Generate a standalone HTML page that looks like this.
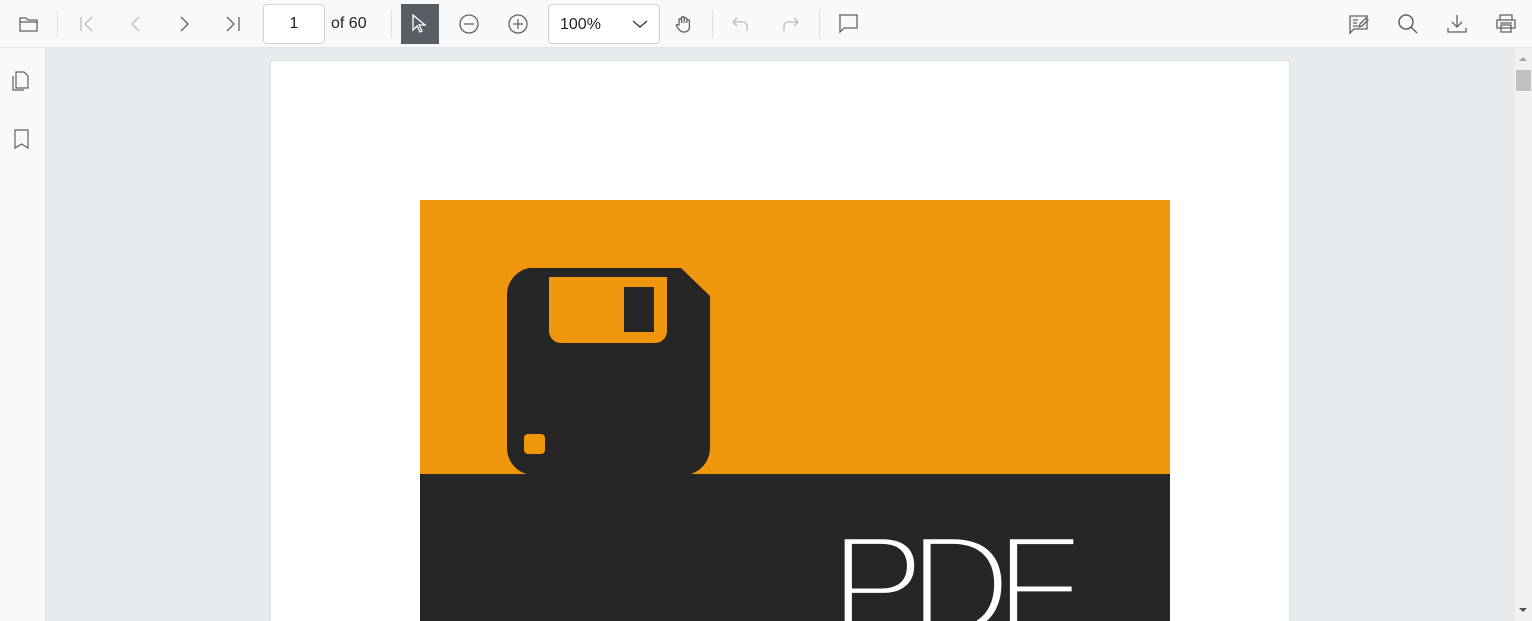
<!DOCTYPE html>
<html><head><style>
*{margin:0;padding:0;box-sizing:border-box}
html,body{width:1532px;height:621px;overflow:hidden}
body{background:#e8ebee;font-family:"Liberation Sans",sans-serif;position:relative}
.tb{position:absolute;left:0;top:0;width:1532px;height:48px;background:#f8f9fa;border-bottom:1px solid #e1e4e8}
.ic{position:absolute;top:12px}
.sep{position:absolute;top:10px;width:1px;height:28px;background:#dcdfe3}
.sb{position:absolute;left:0;top:48px;width:46px;height:573px;background:#f8f9fa;border-right:1px solid #e1e4e8}
</style></head><body>
<div class="tb">
<svg class="ic" style="left:18px;top:14px" width="22" height="20" viewBox="0 0 22 20" fill="none" stroke="#5f6368" stroke-width="1.3"><path d="M2 4h6l2 2h9v11H2z M2 8h17"/></svg>
<div class="sep" style="left:57px"></div>
<svg class="ic" width="24" height="24" style="left:75px" fill="none" stroke="#b8bcc1" stroke-width="1.3"><path d="M6 5v14M17 5l-7 7 7 7"/></svg>
<svg class="ic" width="24" height="24" style="left:124px" fill="none" stroke="#b8bcc1" stroke-width="1.3"><path d="M15 5l-7 7 7 7"/></svg>
<svg class="ic" width="24" height="24" style="left:172px" fill="none" stroke="#5f6368" stroke-width="1.3"><path d="M9 5l7 7-7 7"/></svg>
<svg class="ic" width="24" height="24" style="left:221px" fill="none" stroke="#5f6368" stroke-width="1.3"><path d="M6 5l7 7-7 7M18 5v14"/></svg>
<div style="position:absolute;left:263px;top:4px;width:62px;height:40px;background:#fff;border:1px solid #ced4da;border-radius:4px;text-align:center;line-height:38px;font-size:16px;color:#212529">1</div>
<div style="position:absolute;left:331px;top:15px;font-size:16px;color:#212529">of 60</div>
<div class="sep" style="left:391px"></div>
<div style="position:absolute;left:401px;top:4px;width:38px;height:40px;background:#585e64"></div>
<svg class="ic" width="20" height="22" style="left:410px;top:13px" viewBox="0 0 20 22" fill="none" stroke="#fff" stroke-width="1.3"><path d="M3 2v15l4-4 3 6 2-1-3-6h6z"/></svg>
<svg class="ic" width="24" height="24" style="left:457px" fill="none" stroke="#5f6368" stroke-width="1.3"><circle cx="12" cy="12" r="9"/><path d="M7 12h10"/></svg>
<svg class="ic" width="24" height="24" style="left:506px" fill="none" stroke="#5f6368" stroke-width="1.3"><circle cx="12" cy="12" r="9"/><path d="M7 12h10M12 7v10"/></svg>
<div style="position:absolute;left:548px;top:4px;width:112px;height:40px;background:#fff;border:1px solid #ced4da;border-radius:4px;font-size:16px;color:#212529;line-height:40px;padding-left:11px">100%</div>
<svg class="ic" width="20" height="20" style="left:630px;top:14px" fill="none" stroke="#333" stroke-width="1.3"><path d="M3 7l7 6 7-6"/></svg>
<svg class="ic" width="24" height="24" style="left:672px" fill="none" stroke="#5f6368" stroke-width="1.3"><path d="M7 13V8a1.3 1.3 0 0 1 2.6 0v3V6a1.3 1.3 0 0 1 2.6 0v5V7a1.3 1.3 0 0 1 2.6 0v4V9a1.3 1.3 0 0 1 2.6 0v6c0 3-2 5-5 5h-1c-2 0-3-1-4-2l-3-4c-.5-1 .5-2 1.5-1z"/></svg>
<div class="sep" style="left:712px"></div>
<svg class="ic" width="24" height="24" style="left:729px" fill="none" stroke="#b8bcc1" stroke-width="1.3"><path d="M8 6l-4 4 4 4M4 10h10a4 4 0 0 1 4 4v5"/></svg>
<svg class="ic" width="24" height="24" style="left:778px" fill="none" stroke="#b8bcc1" stroke-width="1.3"><path d="M16 6l4 4-4 4M20 10H10a4 4 0 0 0-4 4v5"/></svg>
<div class="sep" style="left:819px"></div>
<svg class="ic" width="24" height="24" style="left:837px" fill="none" stroke="#5f6368" stroke-width="1.3"><path d="M2 3h18v13H7l-4 4V3z"/></svg>
<svg class="ic" width="24" height="24" style="left:1347px" fill="none" stroke="#5f6368" stroke-width="1.3"><path d="M3 4h17v13H7l-4 4z M6 8h5M6 11h4M6 14h5M12 15l1-3 6-6 2 2-6 6z"/></svg>
<svg class="ic" width="24" height="24" style="left:1396px" fill="none" stroke="#5f6368" stroke-width="1.5"><circle cx="10" cy="10" r="7"/><path d="M15 15l6 6"/></svg>
<svg class="ic" width="24" height="24" style="left:1445px" fill="none" stroke="#5f6368" stroke-width="1.3"><path d="M12 3v12M7 10l5 5 5-5M3 16v4h18v-4"/></svg>
<svg class="ic" width="24" height="24" style="left:1494px" fill="none" stroke="#5f6368" stroke-width="1.3"><path d="M6 8V3h12v5M3 8h18v8H3zM7 13h10v7H7zM6 11h12"/></svg>
</div>
<div class="sb">
<svg style="position:absolute;left:11px;top:22px" width="22" height="22" fill="none" stroke="#5f6368" stroke-width="1.2"><path d="M5 2h8l4 4v12H5z M2 6v14h11"/></svg>
<svg style="position:absolute;left:11px;top:80px" width="22" height="22" fill="none" stroke="#5f6368" stroke-width="1.2"><path d="M4 2h13v18l-6.5-4L4 20z"/></svg>
</div>
<div style="position:absolute;left:270px;top:60px;width:1020px;height:561px;background:#fff;border:1px solid #e1e4e8;border-bottom:none"></div>
<svg style="position:absolute;left:420px;top:200px" width="750" height="421">
<rect width="750" height="275" fill="#f0960c"/>
<rect y="274" width="750" height="147" fill="#262626"/>
<path d="M109 68h152l29 28v152a27 27 0 0 1-27 27H114a27 27 0 0 1-27-27V95a27 27 0 0 1 22-27z" fill="#262626"/>
<path d="M129 77h118v54a12 12 0 0 1-12 12H141a12 12 0 0 1-12-12z" fill="#f0960c"/>
<rect x="204" y="87" width="30" height="45" fill="#262626"/>
<rect x="104" y="234" width="21" height="20" rx="4" fill="#f0960c"/>
<text x="410" y="434" font-family="Liberation Sans" font-size="142" fill="#fff" stroke="#262626" stroke-width="6" textLength="252" lengthAdjust="spacing">PDF</text>
</svg>
<div style="position:absolute;left:1515px;top:48px;width:17px;height:573px;background:#f1f1f1"></div>
<div style="position:absolute;left:1516px;top:70px;width:15px;height:21px;background:#c1c1c1"></div>
<svg style="position:absolute;left:1518px;top:55px" width="10" height="8"><path d="M1 6l4-4 4 4z" fill="#a3a3a3"/></svg>
<svg style="position:absolute;left:1518px;top:606px" width="10" height="8"><path d="M1 2l4 4 4-4z" fill="#505050"/></svg>
</body></html>
